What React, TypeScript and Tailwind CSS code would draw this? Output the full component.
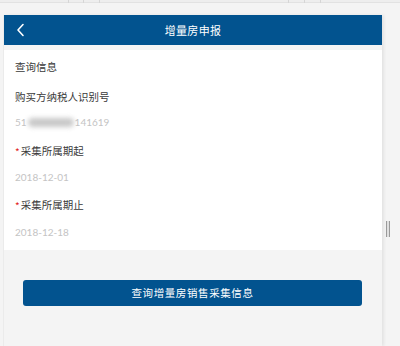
import React from "react";

const font = { fontFamily: '"Noto Sans CJK SC", "Noto Sans", sans-serif' };

function Label({ text, required }: { text: string; required?: boolean }) {
  return (
    <div className="flex items-center h-[14px] leading-[14px] text-[10.5px] text-[#3a3a3a] pl-[11px]">
      {required && <span className="text-[#e2231a] text-[10px] mr-[1px] relative top-[1px]">*</span>}
      <span>{text}</span>
    </div>
  );
}

function Value({ children }: { children: React.ReactNode }) {
  return (
    <div
      className="flex items-center h-[14px] leading-[14px] text-[10px] text-[#c4c4c4] pl-[11px]"
      style={{ fontFamily: 'Lato, "Noto Sans", sans-serif' }}
    >
      {children}
    </div>
  );
}

export default function App() {
  const dividers = [68, 83, 99, 288, 304, 320];
  return (
    <div className="relative w-[400px] h-[346px] bg-[#f4f4f4] overflow-hidden" style={font}>
      <div className="relative h-[3px] bg-[#eeeeee] border-b border-[#e2e2e2]">
        {dividers.map((x) => (
          <div key={x} className="absolute top-0 h-[3px] w-px bg-[#d6d6d6]" style={{ left: x }} />
        ))}
      </div>
      <div className="flex pt-[12px] h-[343px]">
        <div className="w-[4px] border-r border-[#ebebeb]" />
        <div className="w-[378px] flex flex-col shadow-[2px_0_3px_rgba(0,0,0,0.07)] bg-[#f4f4f4]">
          <div className="relative h-[30px] bg-[#02538f] flex items-center justify-center">
            <svg
              className="absolute left-[11px] top-[8px]"
              width="12"
              height="14"
              viewBox="0 0 12 14"
              fill="none"
            >
              <path d="M8 1.5 L3 7 L8 12.5" stroke="white" strokeWidth="1.6" strokeLinecap="round" strokeLinejoin="round" />
            </svg>
            <span className="text-white text-[11px] tracking-[0.3px]">增量房申报</span>
          </div>
          <div className="h-[5px]" />
          <div className="bg-white pt-[10px] pb-[11px]">
            <Label text="查询信息" />
            <div className="h-[16px]" />
            <Label text="购买方纳税人识别号" />
            <div className="h-[11px]" />
            <Value>
              <span>51</span>
              <span className="inline-block w-[46px] h-[9px] rounded-full bg-[#c8c8c8] blur-[2.5px] mx-[1px]" />
              <span>141619</span>
            </Value>
            <div className="h-[15px]" />
            <Label text="采集所属期起" required />
            <div className="h-[12px]" />
            <Value>2018-12-01</Value>
            <div className="h-[14px]" />
            <Label text="采集所属期止" required />
            <div className="h-[13px]" />
            <Value>2018-12-18</Value>
          </div>
          <div className="pt-[30px] px-[19px]">
            <button className="w-[339px] h-[26px] rounded-[3px] bg-[#02538f] text-white text-[10.5px] tracking-[0.6px] flex items-center justify-center">
              查询增量房销售采集信息
            </button>
          </div>
        </div>
        <div className="flex-1" />
      </div>
      <div className="absolute left-[386px] top-[221px] w-[4px] h-[16px] bg-[#e0e0e0] border-l-[1.5px] border-r-[1.5px] border-[#9a9a9a]" />
    </div>
  );
}
